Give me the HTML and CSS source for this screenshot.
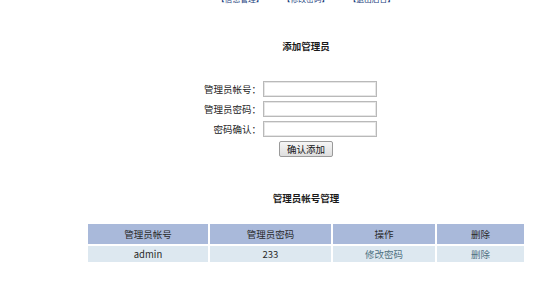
FILE: index.html
```html
<!DOCTYPE html>
<html lang="zh-CN">
<head>
    <meta charset="UTF-8">
    <title>管理员管理</title>
    <link rel="stylesheet" href="styles.css">
</head>
<body>
    <div class="main">
        <div class="nav">
            <a href="#">【信息管理】</a>
            <a href="#">【修改密码】</a>
            <a href="#">【退出后台】</a>
        </div>

        <h2 class="title first">添加管理员</h2>
        <form class="add-form">
            <div class="form-grid">
                <label for="user">管理员帐号：</label>
                <input type="text" id="user">
                <label for="pass">管理员密码：</label>
                <input type="password" id="pass">
                <label for="pass2">密码确认：</label>
                <input type="password" id="pass2">
            </div>
            <div class="form-actions">
                <button type="button">确认添加</button>
            </div>
        </form>

        <h2 class="title second">管理员帐号管理</h2>
        <table class="admin-table">
            <tr>
                <th class="c1">管理员帐号</th>
                <th class="c2">管理员密码</th>
                <th class="c3">操作</th>
                <th class="c4">删除</th>
            </tr>
            <tr>
                <td>admin</td>
                <td>233</td>
                <td><a href="#">修改密码</a></td>
                <td><a href="#">删除</a></td>
            </tr>
        </table>
    </div>
</body>
</html>
```

FILE: styles.css
```css
body {
    margin: 0;
    background-color: #fff;
    font-family: "Noto Sans CJK SC", "DejaVu Sans", sans-serif;
    font-size: 9.5px;
    color: #222;
}
.main {
    margin-left: 88px;
    width: 436px;
}
.nav {
    display: flex;
    justify-content: center;
    gap: 19px;
    margin-top: -6px;
    line-height: 10px;
    font-size: 7.8px;
}
.nav a {
    color: #1d3f7e;
    text-decoration: none;
}
.title {
    margin: 0;
    text-align: center;
    font-size: 9.5px;
    line-height: 12px;
    font-weight: bold;
    color: #1a1a1a;
}
.title.first {
    margin-top: 36px;
}
.title.second {
    margin-top: 35px;
}
.add-form {
    margin: 29px 0 0;
}
.form-grid {
    display: grid;
    grid-template-columns: 75px 114px;
    column-gap: 2px;
    row-gap: 4px;
    margin-left: 98px;
}
.form-grid label {
    text-align: right;
    line-height: 16px;
    color: #222;
}
.form-grid input {
    box-sizing: border-box;
    height: 16px;
    width: 114px;
    margin: 0;
    padding: 0 2px;
    border: 1px solid #b9b9b9;
    box-shadow: inset 0 0 0 1px #e6e6e6;
    font-size: 9.5px;
}
.form-actions {
    text-align: center;
    margin-top: 4px;
}
.form-actions button {
    box-sizing: border-box;
    height: 16px;
    width: 54px;
    padding: 0;
    border: 1px solid #9a9a9a;
    border-radius: 2px;
    background: linear-gradient(#f6f6f6, #dedede);
    font-family: inherit;
    font-size: 9.5px;
    line-height: 14px;
    color: #111;
}
.admin-table {
    margin: 18px -2px 0;
    width: 440px;
    border-collapse: separate;
    border-spacing: 2px;
    table-layout: fixed;
}
.admin-table th,
.admin-table td {
    padding: 0;
    text-align: center;
    font-size: 9.5px;
    font-weight: normal;
}
.admin-table th {
    height: 20px;
    background-color: #a9b9da;
    color: #2a2a2a;
}
.admin-table td {
    height: 16px;
    background-color: #dde8f0;
    color: #2a2a2a;
}
.admin-table td a {
    color: #4f7080;
    text-decoration: none;
}
.c1 { width: 120px; }
.c2 { width: 121px; }
.c3 { width: 102px; }
.c4 { width: 87px; }
```
